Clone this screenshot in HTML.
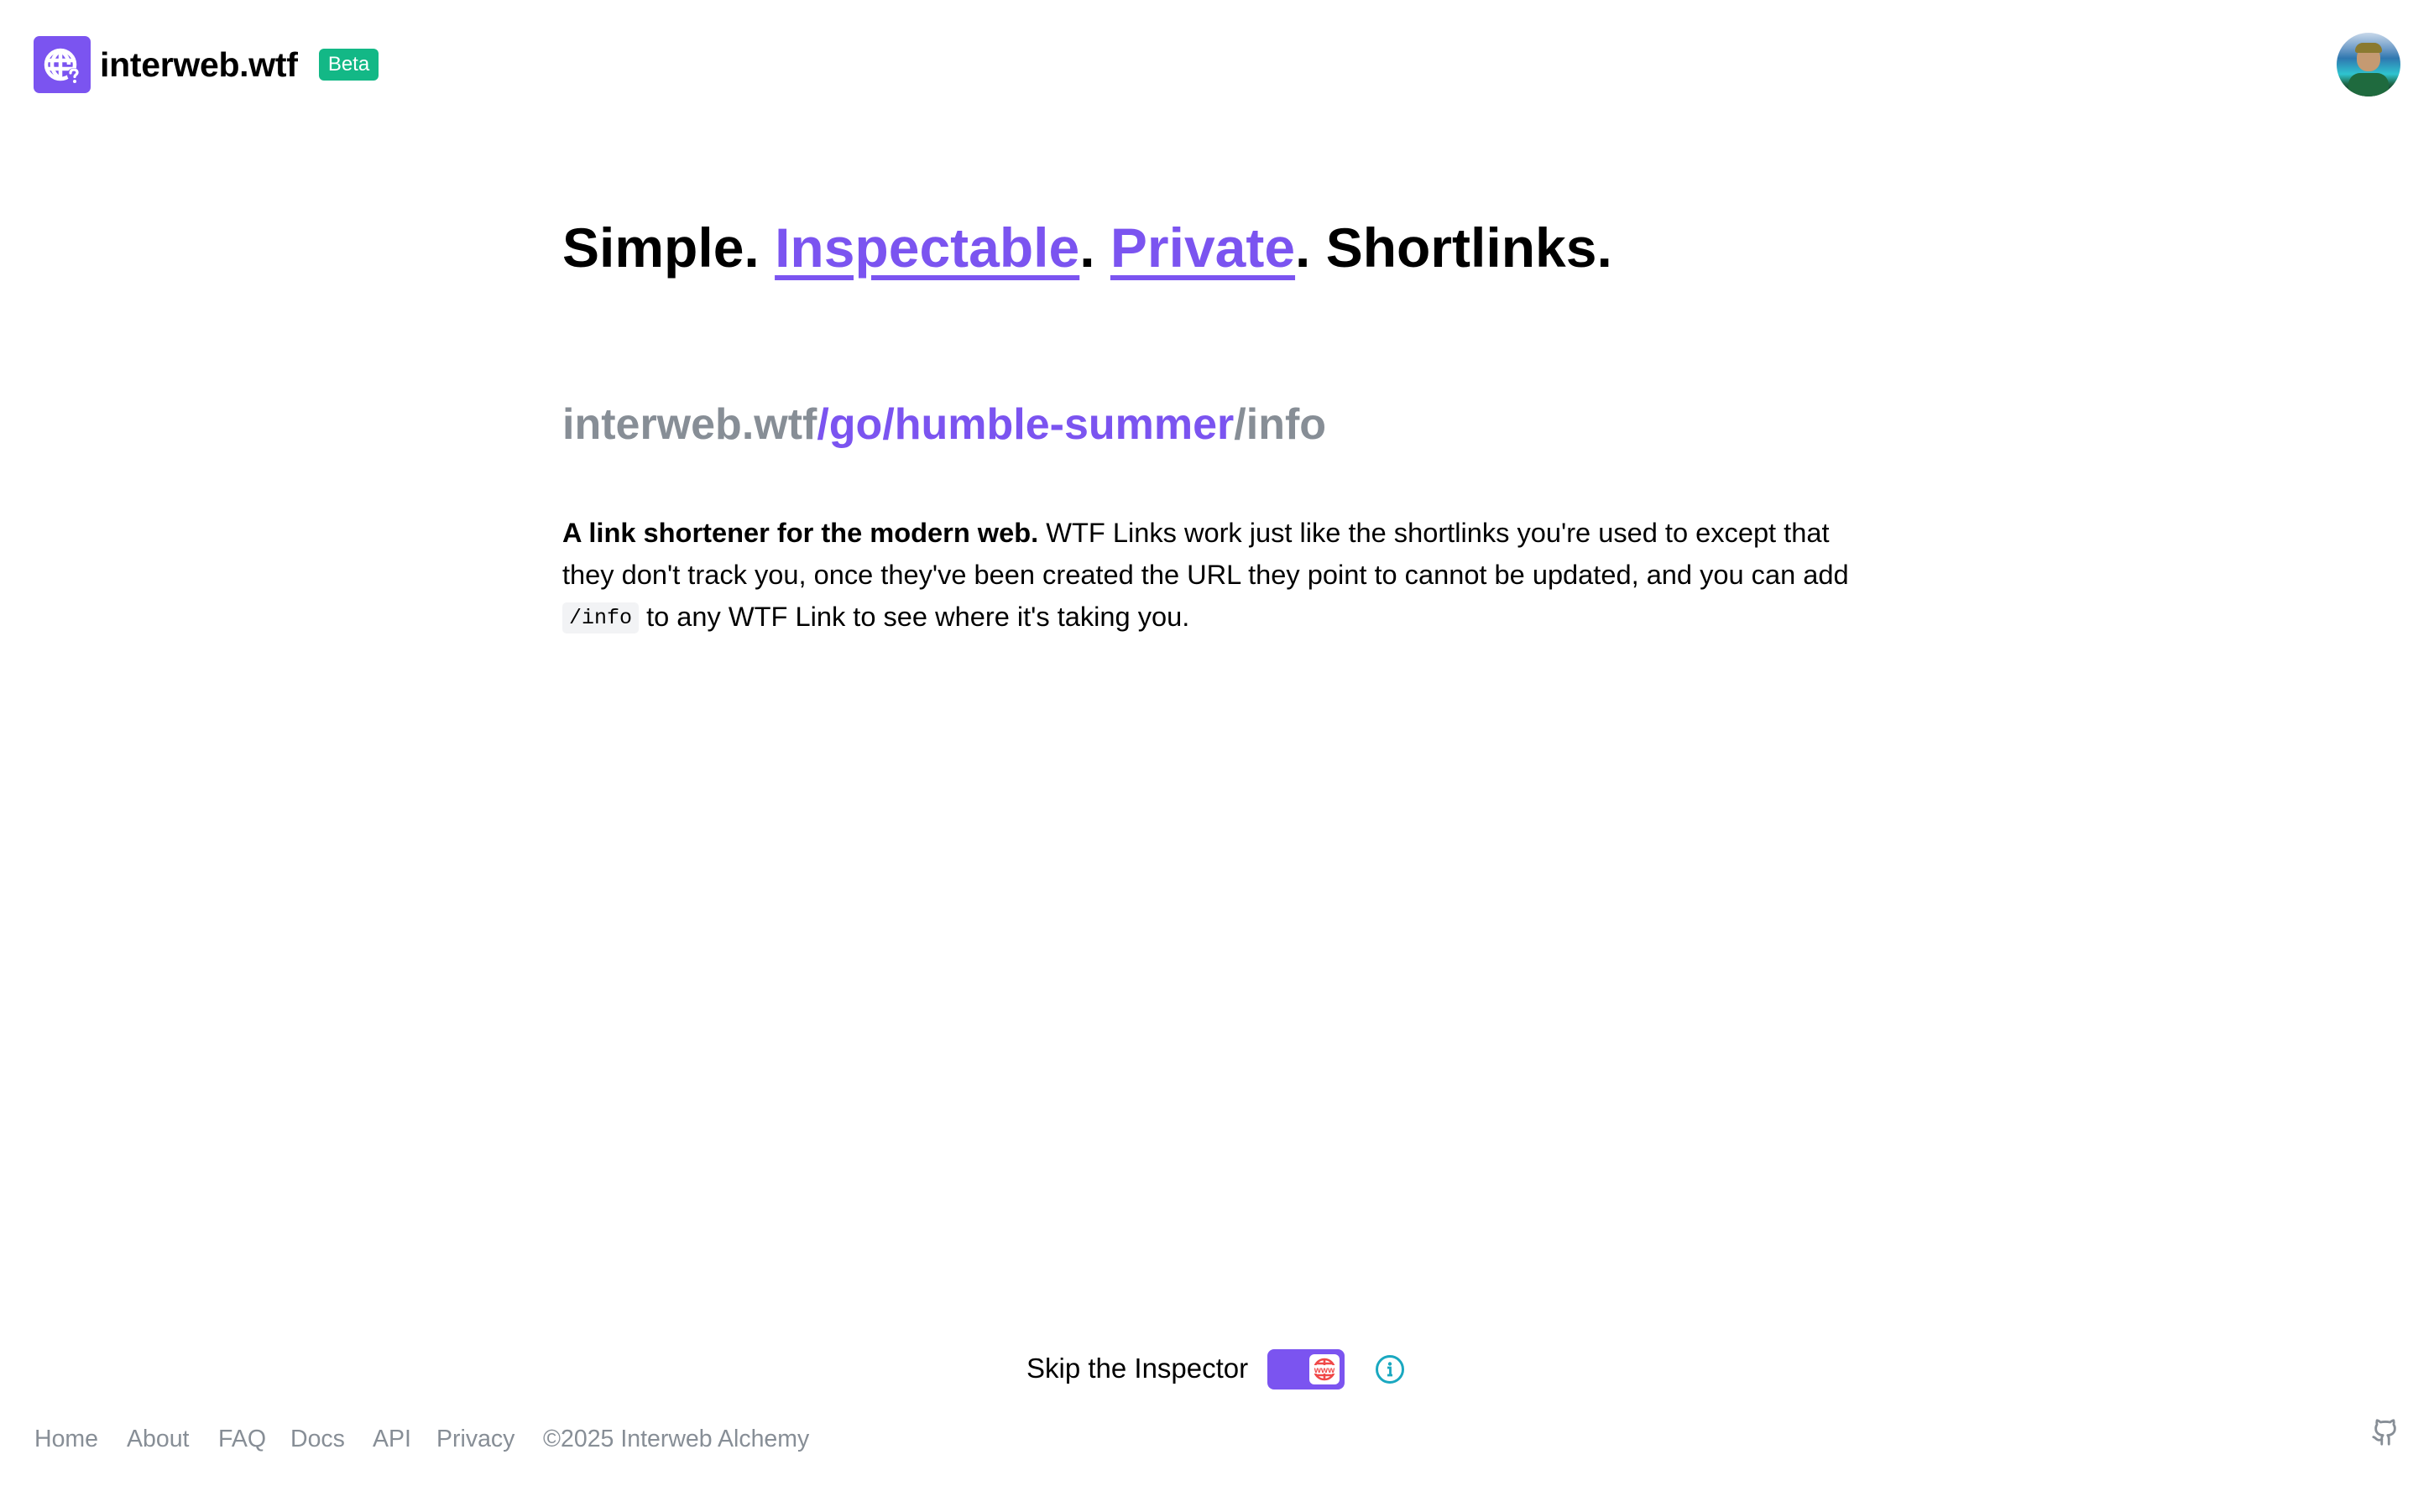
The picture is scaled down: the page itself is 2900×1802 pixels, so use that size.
<!DOCTYPE html>
<html><head><meta charset="utf-8">
<style>
*{margin:0;padding:0;box-sizing:border-box}
html,body{width:2900px;height:1802px;background:#fff;overflow:hidden;font-family:"Liberation Sans",Arial,sans-serif;color:#000;position:relative}
.abs{position:absolute}
.purple{color:#7b54f0}
.gray{color:#878e96}
</style></head><body>

<div class="abs" style="left:40px;top:43px;width:68px;height:68px;background:#7b54f0;border-radius:7px">
<svg width="68" height="68" viewBox="0 0 68 68">
 <g fill="none" stroke="#fff" stroke-width="4.5">
  <circle cx="32" cy="34" r="17"/>
  <path d="M15 29h34M15 39h34M32 17v34M32 17c-7 5-10 11-10 17s3 12 10 17M32 17c7 5 10 11 10 17"/>
 </g>
 <circle cx="48" cy="46" r="8" fill="#7b54f0"/>
 <path d="M44 44c0-3 2-4 4-4s4 1 4 3.5c0 2.5-3 2.5-3 5" fill="none" stroke="#fff" stroke-width="3.2" stroke-linecap="round"/>
 <circle cx="49" cy="54" r="2" fill="#fff"/>
</svg></div>
<div class="abs" style="left:119px;top:53px;font-size:41px;font-weight:bold;line-height:48px;letter-spacing:-0.3px">interweb.wtf</div>
<div class="abs" style="left:380px;top:58px;width:71px;height:38px;background:#13b886;border-radius:6px;color:#fff;font-size:24px;line-height:38px;text-align:center">Beta</div>

<div class="abs" style="left:2784px;top:39px;width:76px;height:76px;border-radius:50%;overflow:hidden;background:linear-gradient(#c8d8ea 0%,#6f9cc8 25%,#2f78b0 40%,#2fc4d0 65%,#1f6a4a 80%,#0e1a10 100%)">
 <div class="abs" style="left:24px;top:16px;width:28px;height:30px;border-radius:45%;background:#c59a72"></div>
 <div class="abs" style="left:22px;top:12px;width:32px;height:12px;border-radius:10px 10px 3px 3px;background:#8a7a30"></div>
 <div class="abs" style="left:14px;top:48px;width:48px;height:30px;border-radius:14px 14px 0 0;background:#1f6a3e"></div>
</div>

<div class="abs" style="left:670px;top:250px;font-size:66px;font-weight:bold;line-height:90px;letter-spacing:0px;white-space:nowrap">Simple. <span class="purple" style="text-decoration:underline;text-decoration-thickness:6px;text-underline-offset:10px">Inspectable</span>. <span class="purple" style="text-decoration:underline;text-decoration-thickness:6px;text-underline-offset:10px">Private</span>. Shortlinks.</div>

<div class="abs gray" style="left:670px;top:471px;font-size:52px;font-weight:bold;line-height:70px;letter-spacing:0px;white-space:nowrap">interweb.wtf<span class="purple">/go/humble-summer</span>/info</div>

<div class="abs" style="left:670px;top:610px;font-size:32.6px;line-height:50px;white-space:nowrap">
<b>A link shortener for the modern web.</b> WTF Links work just like the shortlinks you're used to except that<br>
they don't track you, once they've been created the URL they point to cannot be updated, and you can add<br>
<span style="font-family:'Liberation Mono',monospace;font-size:25px;background:#f2f3f5;border-radius:5px;padding:4px 8px;position:relative;top:-3px">/info</span> to any WTF Link to see where it's taking you.
</div>

<div class="abs" style="left:1223px;top:1611px;font-size:33px;line-height:40px;white-space:nowrap">Skip the Inspector</div>
<div class="abs" style="left:1510px;top:1608px;width:92px;height:48px;background:#7b54f0;border-radius:8px">
 <div class="abs" style="left:50px;top:6px;width:36px;height:36px;background:#fff;border-radius:6px">
  <svg width="36" height="36" viewBox="0 0 36 36"><g fill="none" stroke="#f04848" stroke-width="2.6"><circle cx="18" cy="18" r="12"/><path d="M18 6v24M8 11h20M8 25h20"/></g><rect x="4" y="13" width="28" height="10" fill="#fff"/><text x="18" y="22" font-family="Liberation Sans" font-weight="bold" font-size="10.5" fill="#f04848" text-anchor="middle">www</text></svg>
 </div>
</div>
<svg class="abs" style="left:1638px;top:1614px" width="36" height="36" viewBox="0 0 36 36"><circle cx="18" cy="18" r="15.5" fill="none" stroke="#1aa8c0" stroke-width="3"/><circle cx="18" cy="11.5" r="2.2" fill="#1aa8c0"/><path d="M15 16h3.5v9M15 25h6" stroke="#1aa8c0" stroke-width="2.8" fill="none"/></svg>

<div class="gray" style="font-size:28.5px;line-height:34px">
<span class="abs" style="left:41px;top:1698px">Home</span>
<span class="abs" style="left:151px;top:1698px">About</span>
<span class="abs" style="left:260px;top:1698px">FAQ</span>
<span class="abs" style="left:346px;top:1698px">Docs</span>
<span class="abs" style="left:444px;top:1698px">API</span>
<span class="abs" style="left:520px;top:1698px">Privacy</span>
<span class="abs" style="left:647px;top:1698px">©2025 Interweb Alchemy</span>
</div>

<svg class="abs" style="left:2825px;top:1690px" width="34" height="34" viewBox="0 0 24 24" fill="none" stroke="#878e96" stroke-width="2" stroke-linecap="round" stroke-linejoin="round"><path d="M15 22v-4a4.8 4.8 0 0 0-1-3.5c3 0 6-2 6-5.5.08-1.25-.27-2.48-1-3.5.28-1.15.28-2.350 0-3.5 0 0-1 0-3 1.500-2.64-.5-5.36-.5-8 0C6 2 5 2 5 2c-.3 1.15-.3 2.35 0 3.5A5.403 5.403 0 0 0 4 9c0 3.5 3 5.5 6 5.5-.39.49-.68 1.05-.85 1.65-.17.6-.22 1.23-.15 1.85v4"/><path d="M9 18c-4.51 2-5-2-7-2"/></svg>

</body></html>
